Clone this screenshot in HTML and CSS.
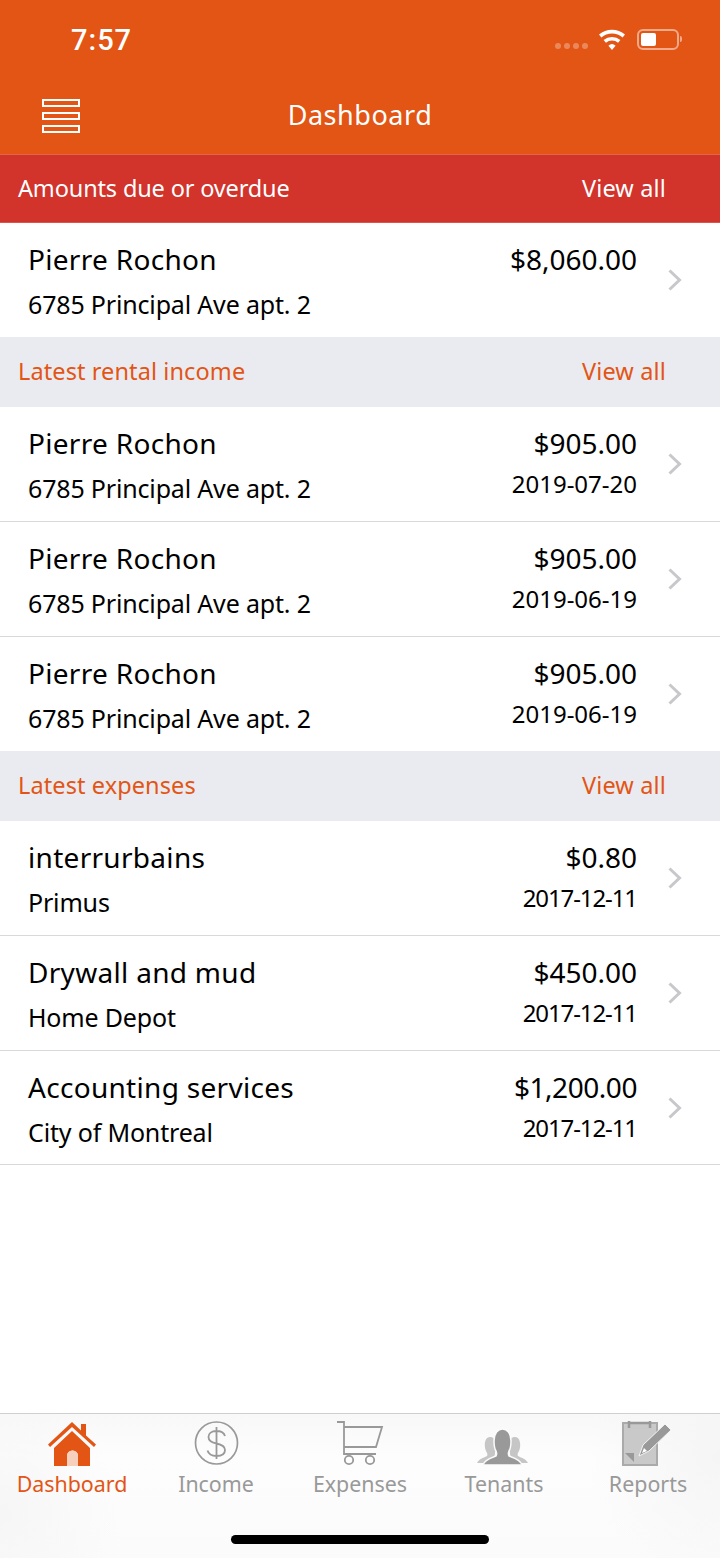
FILE: index.html
```html
<!DOCTYPE html>
<html lang="en">
<head>
<meta charset="utf-8">
<title>Dashboard</title>
<link rel="stylesheet" href="styles.css">
</head>
<body>
<div class="app">
  <header class="top">
    <div class="status">
      <span class="time">7:57</span>
      <div class="status-icons">
        <span class="signal"><i></i><i></i><i></i><i></i></span>
        <svg class="wifi" width="28" height="22" viewBox="0 0 28 22"><path d="M14 21l-3.600-4.300a5.400 5.400 0 0 1 7.200 0zM7.900 13.800L5.600 11a13 13 0 0 1 16.800 0l-2.300 2.800a9.400 9.400 0 0 0-12.200 0zM3.400 8.400L1 5.500a20 20 0 0 1 26 0l-2.400 2.900a16.300 16.300 0 0 0-21.200 0z" fill="#fff"/></svg>
        <span class="battery"><span class="battery-fill"></span></span>
        <span class="battery-cap"></span>
      </div>
    </div>
    <div class="nav">
      <span class="menu"><i></i><i></i><i></i></span>
      <h1 class="title">Dashboard</h1>
    </div>
  </header>
  <main class="list">
    <div class="section section-due"><span class="section-title">Amounts due or overdue</span><a class="view">View all</a></div>
    <div class="row row-plain">
      <div class="left"><div class="name">Pierre Rochon</div><div class="sub">6785 Principal Ave apt. 2</div></div>
      <div class="right"><div class="amount">$8,060.00</div></div>
      <svg class="chev" width="16" height="24" viewBox="0 0 16 24"><path d="M2.500 2.500L12.500 12 2.500 21.500" fill="none" stroke="#c7c7cc" stroke-width="3"/></svg>
    </div>
    <div class="section"><span class="section-title">Latest rental income</span><a class="view">View all</a></div>
    <div class="row">
      <div class="left"><div class="name">Pierre Rochon</div><div class="sub">6785 Principal Ave apt. 2</div></div>
      <div class="right"><div class="amount">$905.00</div><div class="date">2019-07-20</div></div>
      <svg class="chev" width="16" height="24" viewBox="0 0 16 24"><path d="M2.500 2.500L12.500 12 2.500 21.500" fill="none" stroke="#c7c7cc" stroke-width="3"/></svg>
    </div>
    <div class="row">
      <div class="left"><div class="name">Pierre Rochon</div><div class="sub">6785 Principal Ave apt. 2</div></div>
      <div class="right"><div class="amount">$905.00</div><div class="date">2019-06-19</div></div>
      <svg class="chev" width="16" height="24" viewBox="0 0 16 24"><path d="M2.500 2.500L12.500 12 2.500 21.500" fill="none" stroke="#c7c7cc" stroke-width="3"/></svg>
    </div>
    <div class="row row-plain">
      <div class="left"><div class="name">Pierre Rochon</div><div class="sub">6785 Principal Ave apt. 2</div></div>
      <div class="right"><div class="amount">$905.00</div><div class="date">2019-06-19</div></div>
      <svg class="chev" width="16" height="24" viewBox="0 0 16 24"><path d="M2.500 2.500L12.500 12 2.500 21.500" fill="none" stroke="#c7c7cc" stroke-width="3"/></svg>
    </div>
    <div class="section"><span class="section-title">Latest expenses</span><a class="view">View all</a></div>
    <div class="row">
      <div class="left"><div class="name">interrurbains</div><div class="sub">Primus</div></div>
      <div class="right"><div class="amount">$0.80</div><div class="date date-tight">2017-12-11</div></div>
      <svg class="chev" width="16" height="24" viewBox="0 0 16 24"><path d="M2.500 2.500L12.500 12 2.500 21.500" fill="none" stroke="#c7c7cc" stroke-width="3"/></svg>
    </div>
    <div class="row">
      <div class="left"><div class="name">Drywall and mud</div><div class="sub">Home Depot</div></div>
      <div class="right"><div class="amount">$450.00</div><div class="date date-tight">2017-12-11</div></div>
      <svg class="chev" width="16" height="24" viewBox="0 0 16 24"><path d="M2.500 2.500L12.500 12 2.500 21.500" fill="none" stroke="#c7c7cc" stroke-width="3"/></svg>
    </div>
    <div class="row row-last">
      <div class="left"><div class="name">Accounting services</div><div class="sub">City of Montreal</div></div>
      <div class="right"><div class="amount amount-tight">$1,200.00</div><div class="date date-tight">2017-12-11</div></div>
      <svg class="chev" width="16" height="24" viewBox="0 0 16 24"><path d="M2.500 2.500L12.500 12 2.500 21.500" fill="none" stroke="#c7c7cc" stroke-width="3"/></svg>
    </div>
  </main>
  <nav class="tabs">
    <div class="tabrow">
      <div class="tab tab-active">
        <svg class="tabicon" width="48" height="46" viewBox="0 0 48 46"><path d="M0 23.500L24 1l9 8.500V3h5v11.500l10 9-2 2.500L24 6 2 26z" fill="#e35515"/><path d="M6 45V27L24 10l18 17v18H30V35a5 5 0 0 0-11 0v10z" fill="#e35515"/><path d="M19 45V35a5 5 0 0 1 11 0v10z" fill="#f6cfbd"/></svg>
        <span>Dashboard</span>
      </div>
      <div class="tab">
        <svg class="tabicon" width="48" height="46" viewBox="0 0 48 46"><circle cx="24.500" cy="22" r="21" fill="none" stroke="#999" stroke-width="1.700"/><path d="M33 15c-1-3.500-4-5-8.500-5-5 0-8 2.500-8 6s3 5.500 8 6.500 8.500 2.500 8.500 6.500-3.500 6-8.500 6-8-2-9-5.500M24.500 6v32" fill="none" stroke="#999" stroke-width="1.800"/></svg>
        <span>Income</span>
      </div>
      <div class="tab">
        <svg class="tabicon" width="48" height="46" viewBox="0 0 48 46"><path d="M1 1h7v32h32M8 6h38l-6 20H8" fill="none" stroke="#999" stroke-width="1.800"/><circle cx="13" cy="39" r="4.200" fill="none" stroke="#999" stroke-width="1.800"/><circle cx="34" cy="39" r="4.200" fill="none" stroke="#999" stroke-width="1.800"/></svg>
        <span>Expenses</span>
      </div>
      <div class="tab">
        <svg class="tabicon" width="54" height="46" viewBox="0 0 54 46"><path d="M0 42c2-4 6-5 10-7 1-2 0-3-1-5-2-4-2-14 4-14 3 0 6 2 6 6l-2 20zM51 42c-2-4-6-5-10-7-1-2 0-3 1-5 2-4 2-14-4-14-3 0-6 2-6 6l2 20z" fill="#c6c6c6"/><path d="M6 44c1-5 8-7 13-9 1-2 1-3 0-5-2-3-2-6-2-10 0-8 4-12 8.500-12s8.500 4 8.500 12c0 4 0 7-2 10-1 2-1 3 0 5 5 2 12 4 13 9z" fill="#999" stroke="#fbfbfb" stroke-width="1.500"/></svg>
        <span>Tenants</span>
      </div>
      <div class="tab">
        <svg class="tabicon" width="52" height="46" viewBox="0 0 52 46"><rect x="1" y="2" width="34" height="42" fill="#c9c9c9" stroke="#aaa" stroke-width="2"/><path d="M7 0v7M28 0v7M7 2h21" stroke="#999" stroke-width="2.500"/><path d="M3 32h9v9z" fill="#999"/><path d="M17 35l4-11 22-21 6 6-22 21z" fill="#999" stroke="#f4f4f4" stroke-width="1"/><path d="M20 32l2-5 3 3z" fill="#fff"/></svg>
        <span>Reports</span>
      </div>
    </div>
    <div class="home"></div>
  </nav>
</div>
</body>
</html>
```
FILE: styles.css
```css
* { box-sizing: border-box; }
html, body { margin: 0; padding: 0; }
body { font-family: "Noto Sans", "Open Sans", sans-serif; background: #fff; color: #000; }
.app { width: 720px; height: 1558px; display: flex; flex-direction: column; overflow: hidden; }
.top { background: #e35515; height: 155px; border-bottom: 1px solid #e0664a; color: #fff; flex: none; }
.status { height: 77px; display: flex; justify-content: space-between; padding: 23px 38px 0 71px; }
.time { font-family: Roboto, sans-serif; font-size: 29px; font-weight: 500; line-height: 34px; letter-spacing: 1px; }
.status-icons { display: flex; align-items: flex-start; }
.signal { display: flex; gap: 3px; margin: 20px 10px 0 0; }
.signal i { width: 6px; height: 6px; border-radius: 50%; background: rgba(255,255,255,.3); }
.wifi { margin: 6px 11px 0 0; }
.battery { width: 42px; height: 21px; margin-top: 6px; border: 2px solid rgba(255,255,255,.5); border-radius: 6px; padding: 2px; display: block; }
.battery-fill { display: block; width: 15px; height: 13px; background: #fff; border-radius: 2px; }
.battery-cap { width: 2px; height: 6px; margin: 13px 0 0 1px; background: rgba(255,255,255,.5); border-radius: 0 2px 2px 0; }
.nav { position: relative; height: 77px; display: flex; align-items: center; justify-content: center; }
.menu { position: absolute; left: 42px; top: 22px; display: flex; flex-direction: column; gap: 5px; }
.menu i { display: block; width: 38px; height: 8px; border: 2px solid #fff; }
.title { margin: 0 0 2px; font-size: 27px; font-weight: 400; letter-spacing: .55px; line-height: 34px; }
.list { flex: 1; }
.section { height: 70px; background: #e9ebf0; color: #e35515; display: flex; align-items: center; justify-content: space-between; padding: 0 54px 2px 18px; font-size: 23.500px; letter-spacing: .1px; }
.section-due { height: 68px; background: #d2332b; color: #fff; border-bottom: 1px solid #e0524c; }
.section-due .section-title { letter-spacing: -.15px; }
.view { display: block; letter-spacing: .15px; }
.row { height: 115px; display: flex; align-items: flex-start; padding: 17px 37px 0 28px; border-bottom: 1px solid #d9d9d9; }
.row-plain { height: 114px; border-bottom: 0; }
.row-last { height: 114px; }
.left { flex: 1; }
.name { font-size: 28px; line-height: 38px; letter-spacing: .3px; }
.sub { font-size: 25px; line-height: 34px; margin-top: 9px; letter-spacing: -.17px; }
.right { text-align: right; margin-right: 30px; }
.amount { font-size: 28px; line-height: 38px; }
.amount-tight { letter-spacing: -.45px; }
.date { font-size: 24px; line-height: 34px; margin-top: 5px; }
.date-tight { letter-spacing: -1.100px; }
.chev { flex: none; margin-top: 28px; }
.tabs { flex: none; height: 145px; border-top: 1px solid #cfcfcf; background: radial-gradient(circle at 100% 30%, #f5f5f5, transparent 130px), radial-gradient(circle at 0 70%, #f6f6f6, transparent 120px), linear-gradient(#f8f8f8, #fdfdfd 30%, #fbfbfb); display: flex; flex-direction: column; }
.tabrow { display: flex; justify-content: space-between; padding-top: 7px; }
.tab { width: 144px; display: flex; flex-direction: column; align-items: center; color: #999; font-size: 21.400px; line-height: 30px; }
.tab-active { color: #e35515; }
.tabicon { display: block; margin-bottom: 2px; }
.home { width: 258px; height: 9px; border-radius: 5px; background: #000; margin: 36px auto 0; }
```
